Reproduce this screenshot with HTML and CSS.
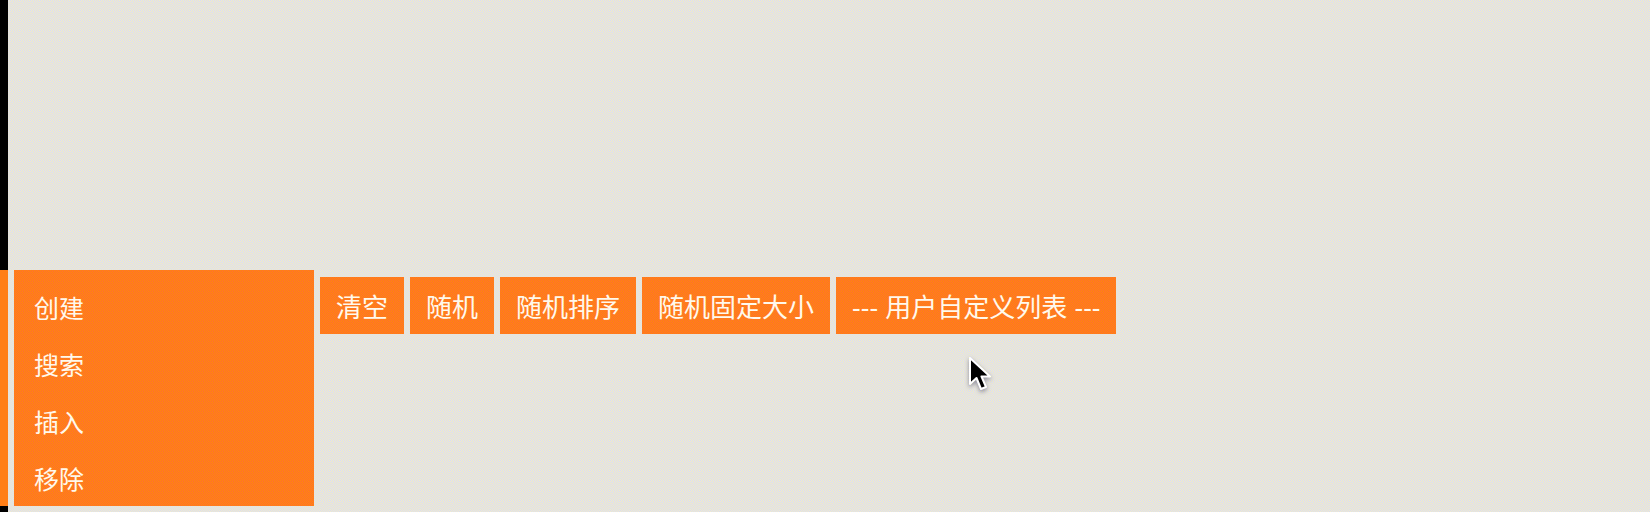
FILE: index.html
```html
<!DOCTYPE html>
<html>
<head>
    <title>Menu</title>
    <link rel="stylesheet" href="styles.css">
</head>
<body>
    <div class="rail">
        <div class="rail-mark"></div>
    </div>

    <div class="content">
        <ul class="menu">
            <li class="menu-item">创建</li>
            <li class="menu-item">搜索</li>
            <li class="menu-item">插入</li>
            <li class="menu-item">移除</li>
        </ul>
        <div class="toolbar">
            <button class="tool">清空</button>
            <button class="tool">随机</button>
            <button class="tool">随机排序</button>
            <button class="tool">随机固定大小</button>
            <button class="tool">--- 用户自定义列表 ---</button>
        </div>
    </div>

    <svg class="cursor" width="24" height="36" viewBox="0 0 24 36">
        <path d="M2 2 L2 28 L8.5 22 L13 33 L18 31 L13.5 20.5 L22 20.5 Z" fill="#000" stroke="#fff" stroke-width="2" stroke-linejoin="round"/>
    </svg>
</body>
</html>
```

FILE: styles.css
```css
html, body {
    height: 100%;
}

body {
    margin: 0;
    display: flex;
    overflow: hidden;
    font-family: "Liberation Sans", "Noto Sans CJK SC", sans-serif;
    background: repeating-conic-gradient(#f6f3bc 0 25%, #d6d6ff 0 50%) 0 0 / 2px 2px;
}

.rail {
    width: 8px;
    flex-shrink: 0;
    background: #000;
}

.rail-mark {
    margin-top: 270px;
    height: 236px;
    background: #ff7f17;
}

.content {
    flex-grow: 1;
    display: flex;
    align-items: flex-start;
    padding: 270px 0 6px 6px;
}

.menu {
    width: 300px;
    height: 236px;
    margin: 0;
    padding: 24px 20px 11px;
    box-sizing: border-box;
    list-style: none;
    display: flex;
    flex-direction: column;
    gap: 27px;
    background: repeating-conic-gradient(#ff6a34 0 25%, #ff8c06 0 50%) 0 0 / 2px 2px;
}

.menu-item {
    font-size: 25px;
    line-height: 30px;
    color: #fff9ec;
}

.toolbar {
    display: flex;
    gap: 6px;
    margin: 7px 0 0 6px;
}

.tool {
    height: 57px;
    padding: 0 16px;
    border: none;
    font-family: inherit;
    font-size: 26px;
    color: #fff9ec;
    white-space: nowrap;
    background: repeating-conic-gradient(#ff6a34 0 25%, #ff8c06 0 50%) 0 0 / 2px 2px;
}

.cursor {
    position: absolute;
    left: 968px;
    top: 356px;
    filter: drop-shadow(0 2px 2px rgba(60, 60, 90, 0.5));
}
```
